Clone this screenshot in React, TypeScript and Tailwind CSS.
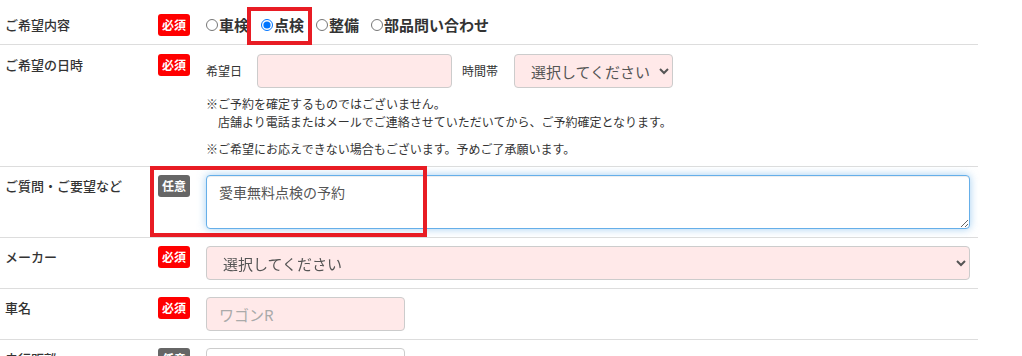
import { useEffect, useRef } from 'react';

const font = { fontFamily: '"Noto Sans CJK JP", "Noto Sans", sans-serif' };

function Badge({ required }: { required?: boolean }) {
  return (
    <span
      className={`flex h-[22px] w-[32px] shrink-0 items-center justify-center rounded-[3px] text-[12px] font-bold leading-none text-white ${
        required ? 'bg-[#ff0000]' : 'bg-[#666666]'
      }`}
    >
      {required ? '必須' : '任意'}
    </span>
  );
}

function Row({
  label,
  required,
  className = '',
  children,
}: {
  label: string;
  required?: boolean;
  className?: string;
  children: React.ReactNode;
}) {
  return (
    <div className={`relative flex border-b border-[#dddddd] pb-[8px] ${className}`}>
      <div className="w-[158px] shrink-0 pl-[5px] text-[13px] font-medium leading-[22px] text-[#333333]">
        {label}
      </div>
      <div className="w-[48px] shrink-0">
        <Badge required={required} />
      </div>
      <div className="min-w-0 flex-1 pr-[8px]">{children}</div>
    </div>
  );
}

const radios = ['車検', '点検', '整備', '部品問い合わせ'];

export default function App() {
  const areaRef = useRef<HTMLTextAreaElement>(null);

  useEffect(() => {
    const el = areaRef.current;
    if (el) {
      el.focus();
      el.setSelectionRange(el.value.length, el.value.length);
    }
  }, []);

  return (
    <div className="h-[356px] w-[1022px] overflow-hidden bg-white" style={font}>
      <div className="w-[978px]">
        {/* ご希望内容 */}
        <Row label="ご希望内容" required className="pt-[14px]">
          <div className="flex h-[22px] items-center gap-[12px]">
            {radios.map((r, i) => (
              <label key={r} className="flex items-center text-[15px] font-bold text-[#333333]">
                <input
                  type="radio"
                  name="kind"
                  defaultChecked={i === 1}
                  className="m-0 mr-[1px] h-[12px] w-[12px] accent-[#0075ff]"
                />
                {r}
              </label>
            ))}
          </div>
          {/* highlight box */}
          <div className="pointer-events-none absolute left-[247px] top-[7px] h-[38px] w-[65px] border-[4px] border-[#e81c24]" />
        </Row>

        {/* ご希望の日時 */}
        <Row label="ご希望の日時" required className="pt-[9px]">
          <div className="flex items-center">
            <span className="w-[51px] text-[12px] text-[#333333]">希望日</span>
            <input
              type="text"
              className="h-[34px] w-[195px] rounded-[4px] border border-[#cccccc] bg-[#ffe9e9]"
            />
            <span className="ml-[10px] w-[52px] text-[12px] text-[#333333]">時間帯</span>
            <select className="h-[34px] w-[159px] rounded-[4px] border border-[#cccccc] bg-[#ffe9e9] pl-[12px] text-[15px] text-[#555555]">
              <option>選択してください</option>
            </select>
          </div>
          <div className="mt-[7px] text-[12px] leading-[18px] text-[#333333]">
            <p>※ご予約を確定するものではございません。</p>
            <p className="pl-[12px]">店舗より電話またはメールでご連絡させていただいてから、ご予約確定となります。</p>
            <p className="mt-[9px]">※ご希望にお応えできない場合もございます。予めご了承願います。</p>
          </div>
        </Row>

        {/* ご質問・ご要望など */}
        <Row label="ご質問・ご要望など" className="pt-[8px]">
          <textarea
            ref={areaRef}
            defaultValue="愛車無料点検の予約"
            className="block h-[54px] w-full resize-y rounded-[4px] border border-[#66afe9] bg-white px-[12px] py-[6px] text-[14px] leading-[20px] text-[#555555] caret-[#333333] outline-none shadow-[inset_0_1px_1px_rgba(0,0,0,0.075),0_0_8px_rgba(102,175,233,0.6)]"
          />
          <div className="pointer-events-none absolute left-[150px] top-[-1px] h-[71px] w-[277px] border-[4px] border-[#e81c24]" />
        </Row>

        {/* メーカー */}
        <Row label="メーカー" required className="pt-[8px]">
          <select className="block h-[34px] w-full rounded-[4px] border border-[#cccccc] bg-[#ffe9e9] pl-[12px] text-[15px] text-[#555555]">
            <option>選択してください</option>
          </select>
        </Row>

        {/* 車名 */}
        <Row label="車名" required className="pt-[8px]">
          <input
            type="text"
            placeholder="ワゴンR"
            className="block h-[34px] w-[199px] rounded-[4px] border border-[#cccccc] bg-[#ffe9e9] px-[12px] text-[15px] text-[#555555] placeholder:text-[#aaaaaa]"
          />
        </Row>

        {/* 走行距離 */}
        <Row label="走行距離" className="pt-[8px]">
          <input
            type="text"
            className="block h-[34px] w-[199px] rounded-[4px] border border-[#cccccc] bg-white px-[12px] text-[15px]"
          />
        </Row>
      </div>
    </div>
  );
}
